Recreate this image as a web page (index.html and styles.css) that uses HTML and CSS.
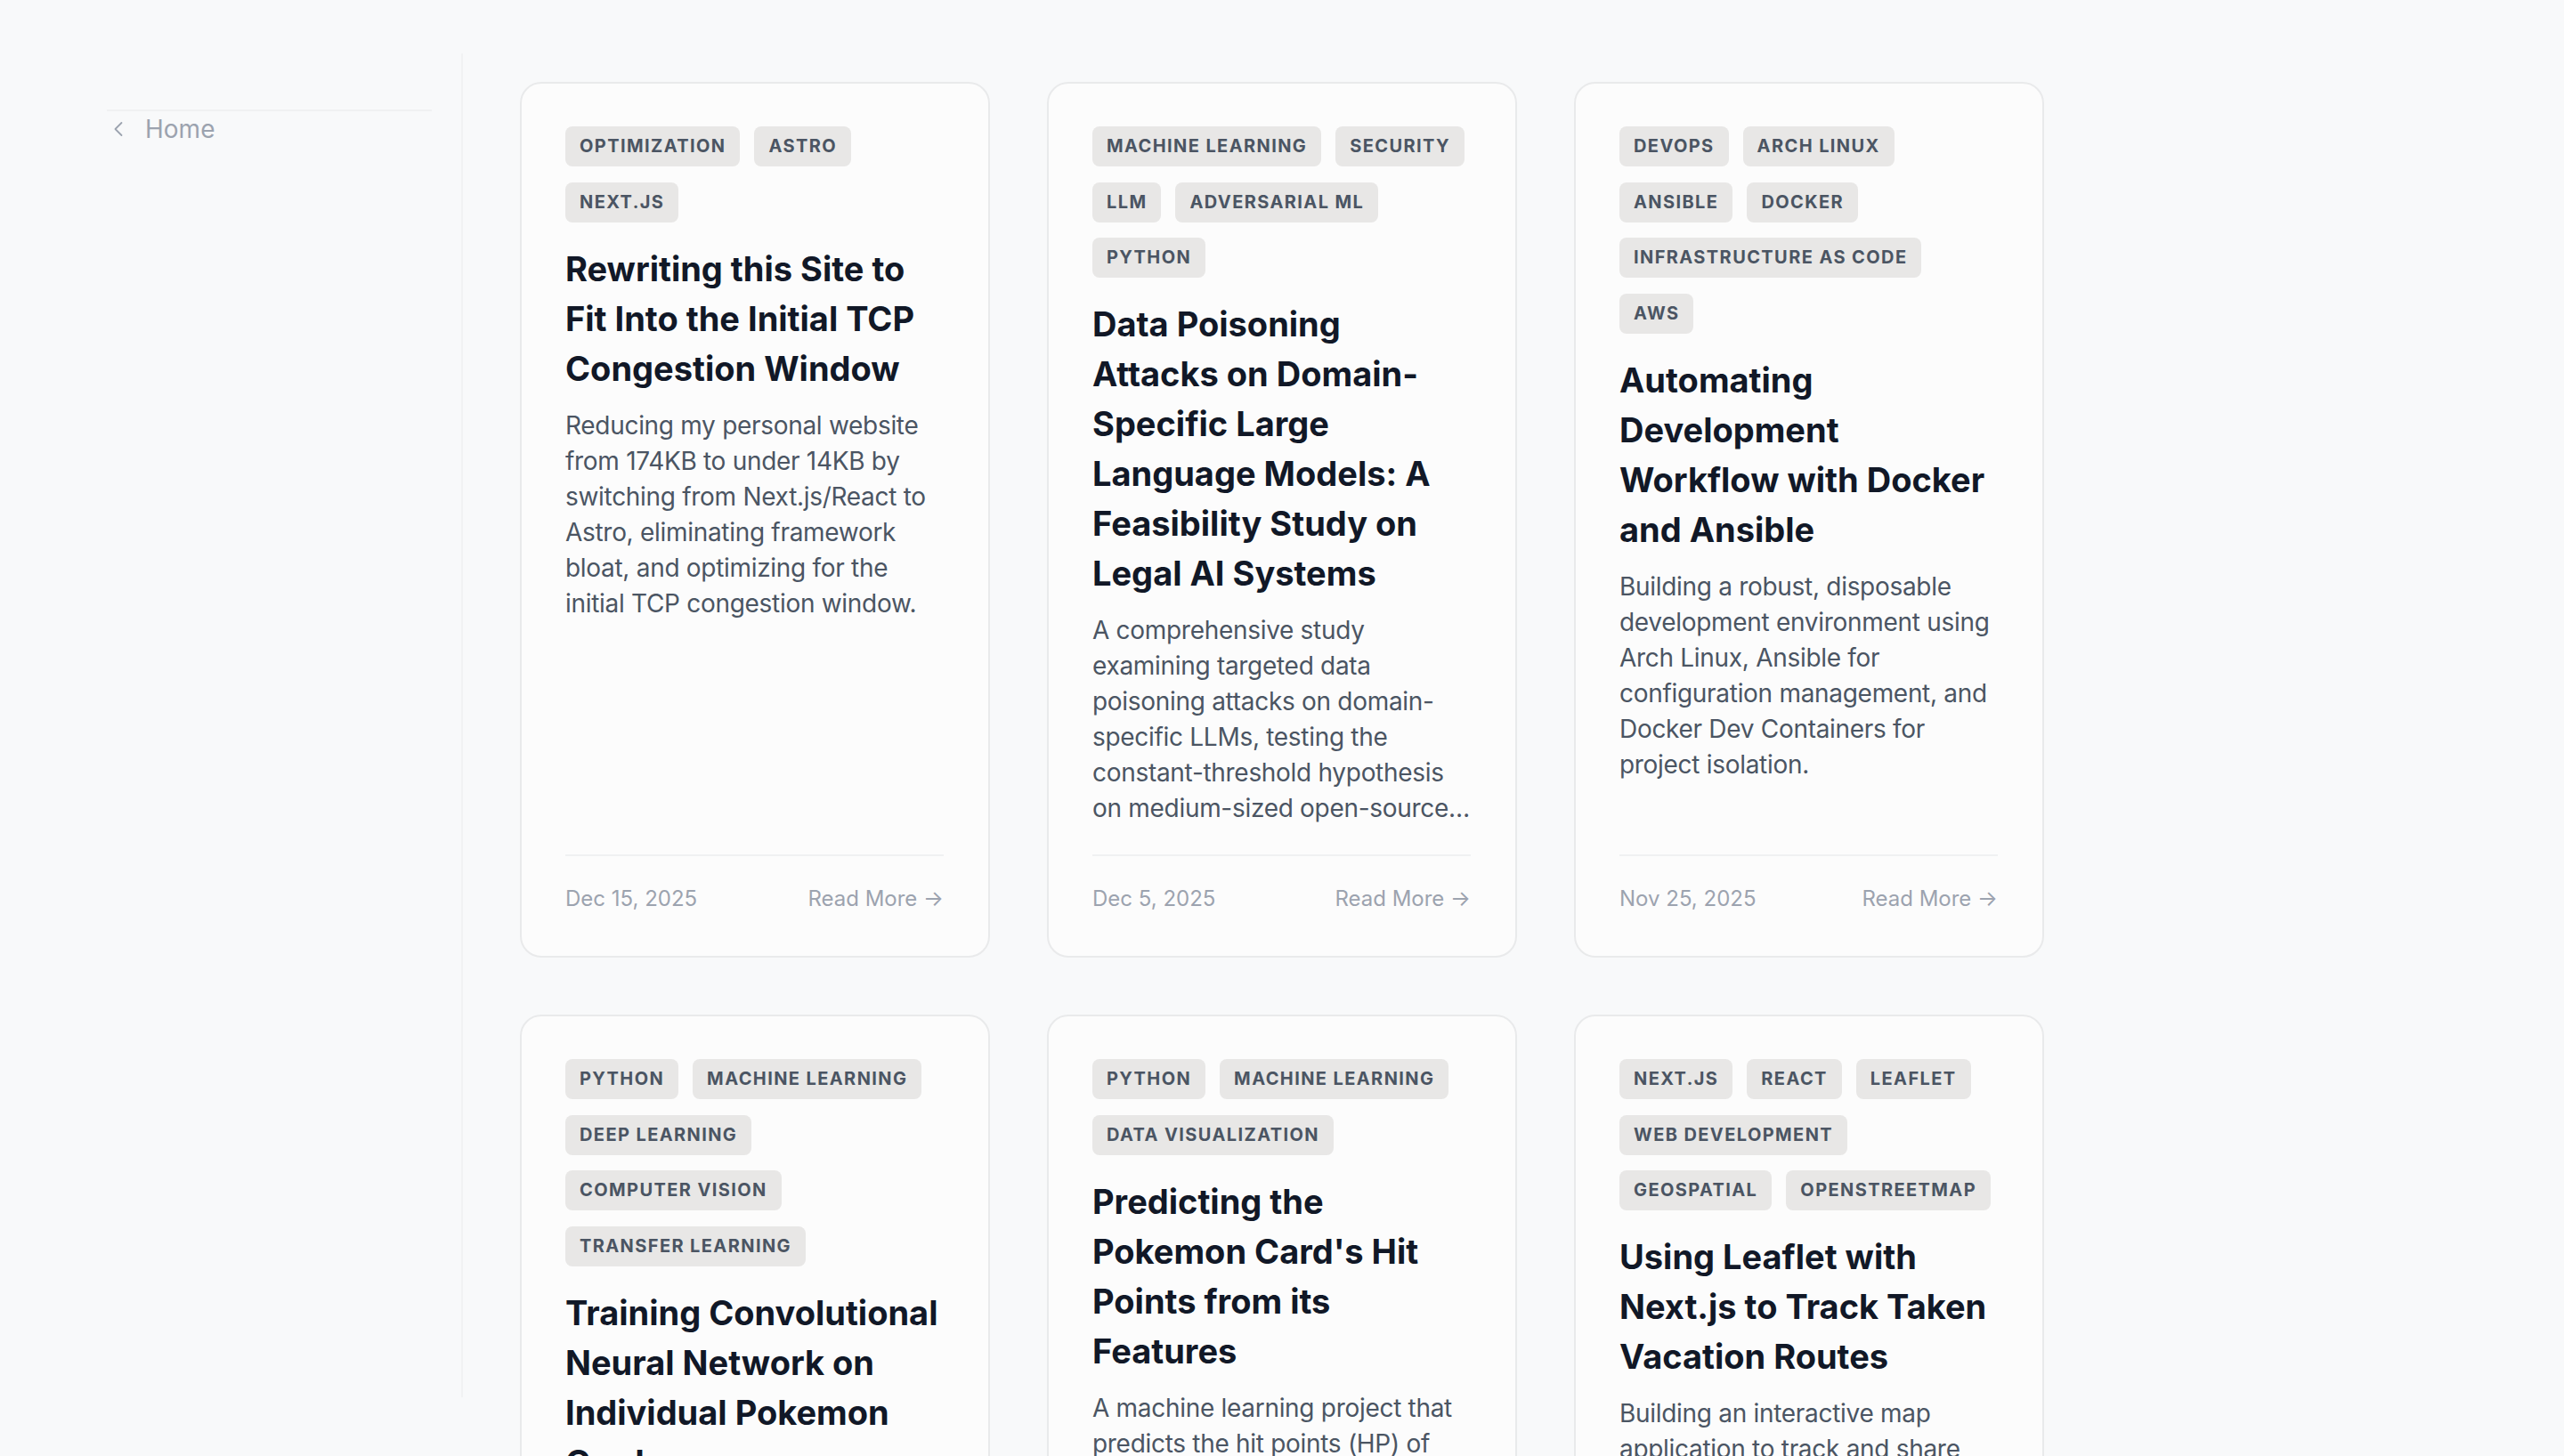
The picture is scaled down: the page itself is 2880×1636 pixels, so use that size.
FILE: index.html
```html
<!DOCTYPE html>
<html lang="en">
<head>
<meta charset="utf-8">
<title>Blog</title>
<link rel="stylesheet" href="styles.css">
</head>
<body>
<div class="layout">
  <aside class="sidebar">
    <nav class="nav">
      <a class="nav-link" href="#">
        <svg class="chev" width="12" height="18" viewBox="0 0 12 18" aria-hidden="true"><path d="M9.5 2 L2.5 9 L9.5 16" fill="none" stroke="#9ca3af" stroke-width="1.8" stroke-linecap="round" stroke-linejoin="round"/></svg>
        <span>Home</span>
      </a>
    </nav>
  </aside>
  <main class="main">
    <div class="grid">
      <article class="card">
        <div class="tags"><span class="tag">Optimization</span><span class="tag">Astro</span><span class="tag">Next.js</span></div>
        <h2 class="title">Rewriting this Site to Fit Into the Initial TCP Congestion Window</h2>
        <p class="desc">Reducing my personal website from 174KB to under 14KB by switching from Next.js/React to Astro, eliminating framework bloat, and optimizing for the initial TCP congestion window.</p>
        <div class="foot"><span>Dec 15, 2025</span><a href="#">Read More →</a></div>
      </article>
      <article class="card">
        <div class="tags"><span class="tag">Machine Learning</span><span class="tag">Security</span><span class="tag">LLM</span><span class="tag">Adversarial ML</span><span class="tag">Python</span></div>
        <h2 class="title">Data Poisoning Attacks on Domain-Specific Large Language Models: A Feasibility Study on Legal AI Systems</h2>
        <p class="desc">A comprehensive study examining targeted data poisoning attacks on domain-specific LLMs, testing the constant-threshold hypothesis on medium-sized open-source…</p>
        <div class="foot"><span>Dec 5, 2025</span><a href="#">Read More →</a></div>
      </article>
      <article class="card">
        <div class="tags"><span class="tag">DevOps</span><span class="tag">Arch Linux</span><span class="tag">Ansible</span><span class="tag">Docker</span><span class="tag">Infrastructure as Code</span><span class="tag">AWS</span></div>
        <h2 class="title">Automating Development Workflow with Docker and Ansible</h2>
        <p class="desc">Building a robust, disposable development environment using Arch Linux, Ansible for configuration management, and Docker Dev Containers for project isolation.</p>
        <div class="foot"><span>Nov 25, 2025</span><a href="#">Read More →</a></div>
      </article>
      <article class="card">
        <div class="tags"><span class="tag">Python</span><span class="tag">Machine Learning</span><span class="tag">Deep Learning</span><span class="tag">Computer Vision</span><span class="tag">Transfer Learning</span></div>
        <h2 class="title">Training Convolutional Neural Network on Individual Pokemon Cards</h2>
        <p class="desc">Fine-tuning a pretrained convolutional neural network to recognize individual Pokemon cards from photos using transfer learning.</p>
        <div class="foot"><span>Oct 12, 2025</span><a href="#">Read More →</a></div>
      </article>
      <article class="card">
        <div class="tags"><span class="tag">Python</span><span class="tag">Machine Learning</span><span class="tag">Data Visualization</span></div>
        <h2 class="title">Predicting the Pokemon Card's Hit Points from its Features</h2>
        <p class="desc">A machine learning project that predicts the hit points (HP) of Pokemon cards from their attributes such as type, stage, attacks and weaknesses.</p>
        <div class="foot"><span>Sep 30, 2025</span><a href="#">Read More →</a></div>
      </article>
      <article class="card">
        <div class="tags"><span class="tag">Next.js</span><span class="tag">React</span><span class="tag">Leaflet</span><span class="tag">Web Development</span><span class="tag">Geospatial</span><span class="tag">OpenStreetMap</span></div>
        <h2 class="title">Using Leaflet with Next.js to Track Taken Vacation Routes</h2>
        <p class="desc">Building an interactive map application to track and share vacation routes using Leaflet, Next.js and OpenStreetMap data.</p>
        <div class="foot"><span>Aug 18, 2025</span><a href="#">Read More →</a></div>
      </article>
    </div>
  </main>
</div>
</body>
</html>
```

FILE: styles.css
```css
* { box-sizing: border-box; }

html, body {
  margin: 0;
  height: 100%;
  overflow: hidden;
}

body {
  background: #f8f9fa;
  font-family: Inter, "Noto Sans", "Liberation Sans", sans-serif;
  color: #111827;
}

a { text-decoration: none; color: inherit; }

.layout {
  display: flex;
  align-items: flex-start;
}

.sidebar {
  flex: 0 0 520px;
  margin-top: 60px;
  height: 1510px;
  padding: 63px 33px 0 120px;
  border-right: 2px solid #f1f2f3;
}

.nav {
  border-top: 2px solid #f0f1f2;
}

.nav-link {
  display: flex;
  align-items: center;
  gap: 24px;
  padding-left: 7px;
  font-size: 28px;
  line-height: 40px;
  color: #9ca3af;
}

.chev { display: block; flex: none; }

.main {
  padding: 92px 0 0 64px;
}

.grid {
  display: grid;
  grid-template-columns: repeat(3, 528px);
  column-gap: 64px;
  row-gap: 64px;
}

.card {
  display: flex;
  flex-direction: column;
  background: #fcfcfc;
  border: 2px solid #e9eaeb;
  border-radius: 24px;
  padding: 48px 50px 48px 49px;
}

.tags {
  display: flex;
  flex-wrap: wrap;
  gap: 17.5px 16px;
  margin-bottom: 24px;
}

.tag {
  display: inline-block;
  background: #e8e7e6;
  color: #4b5563;
  border-radius: 8px;
  padding: 8px 16px;
  font-size: 20px;
  line-height: 29px;
  font-weight: 700;
  letter-spacing: 1.4px;
  text-transform: uppercase;
}

.title {
  margin: 0 0 16px;
  font-size: 38px;
  line-height: 56px;
  font-weight: 700;
  color: #111827;
}

.desc {
  margin: 0 0 32px;
  font-size: 28px;
  line-height: 40px;
  letter-spacing: -0.3px;
  color: #4b5563;
  display: -webkit-box;
  -webkit-box-orient: vertical;
  -webkit-line-clamp: 6;
  overflow: hidden;
}

.foot {
  margin-top: auto;
  padding-top: 32px;
  border-top: 2px solid #f0f1f2;
  display: flex;
  justify-content: space-between;
  font-size: 24px;
  line-height: 32px;
  color: #9ca3af;
}
```
